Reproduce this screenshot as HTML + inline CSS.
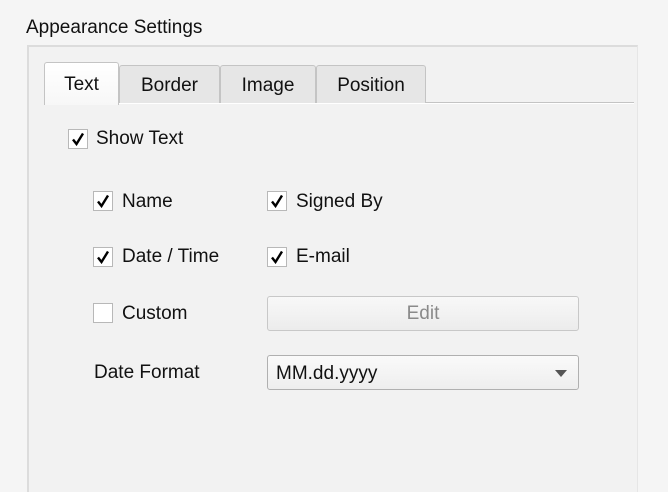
<!DOCTYPE html><html><head><style>
html,body{margin:0;width:668px;height:492px;overflow:hidden}
body{background:#f5f5f5;font-family:"Liberation Sans",sans-serif;color:#111;position:relative;font-size:19px}
.a{position:absolute}
.t{position:absolute;line-height:22px;white-space:nowrap}
.cb{position:absolute;width:18px;height:18px;background:#fff;border:1px solid #b8b8b8;box-sizing:content-box}
.cb svg{position:absolute;left:2px;top:2px}
.tab{position:absolute;top:65px;height:37px;background:#e6e6e6;border:1px solid #c4c4c4;border-bottom:none;border-radius:3px 3px 0 0;text-align:center;line-height:40px;font-size:19px}
</style></head><body>
<div class="t" style="left:26px;top:17px;font-size:19px">Appearance Settings</div>
<div class="a" style="left:27px;top:45px;width:608px;height:445px;background:#f2f2f2;border-top:2px solid #dcdcdc;border-left:2px solid #dcdcdc;border-right:1px solid #e6e6e6"></div>
<div class="a" style="left:44px;top:102px;width:590px;height:1px;background:#c4c4c4"></div>
<div class="a" style="left:44px;top:103px;width:590px;height:1px;background:#fff"></div>
<div class="tab" style="left:119px;width:99px">Border</div>
<div class="tab" style="left:220px;width:94px">Image</div>
<div class="tab" style="left:316px;width:108px">Position</div>
<div class="tab" style="left:44px;top:62px;height:42px;width:73px;background:linear-gradient(#fff,#f7f7f7);line-height:44px;border-bottom:none">Text</div>
<svg width="0" height="0" style="position:absolute"><defs><symbol id="ck" viewBox="0 0 14 14"><path d="M2 7.5 L5.5 12 L12 1.5" fill="none" stroke="#000" stroke-width="2.4"/></symbol></defs></svg>
<div class="cb" style="left:68px;top:129px"><svg width="14" height="14"><use href="#ck"/></svg></div>
<div class="t" style="left:96px;top:128px">Show Text</div>
<div class="cb" style="left:93px;top:191px"><svg width="14" height="14"><use href="#ck"/></svg></div>
<div class="t" style="left:122px;top:191px">Name</div>
<div class="cb" style="left:267px;top:191px"><svg width="14" height="14"><use href="#ck"/></svg></div>
<div class="t" style="left:296px;top:191px">Signed By</div>
<div class="cb" style="left:93px;top:247px"><svg width="14" height="14"><use href="#ck"/></svg></div>
<div class="t" style="left:122px;top:246px">Date / Time</div>
<div class="cb" style="left:267px;top:247px"><svg width="14" height="14"><use href="#ck"/></svg></div>
<div class="t" style="left:296px;top:246px">E-mail</div>
<div class="cb" style="left:93px;top:303px"></div>
<div class="t" style="left:122px;top:303px">Custom</div>
<div class="a" style="left:267px;top:296px;width:310px;height:33px;border:1px solid #c8c8c8;border-radius:3px;background:linear-gradient(#f8f8f8,#ececec);text-align:center;line-height:34px;color:#8a8a8a">Edit</div>
<div class="t" style="left:94px;top:362px">Date Format</div>
<div class="a" style="left:267px;top:355px;width:310px;height:33px;border:1px solid #b0b0b0;border-radius:3px;background:linear-gradient(#fafafa,#eeeeee);line-height:36px">
<span style="position:absolute;left:8px">MM.dd.yyyy</span>
<svg style="position:absolute;left:287px;top:14px" width="12" height="7"><path d="M0 0H12L6 7Z" fill="#555"/></svg></div>
</body></html>
